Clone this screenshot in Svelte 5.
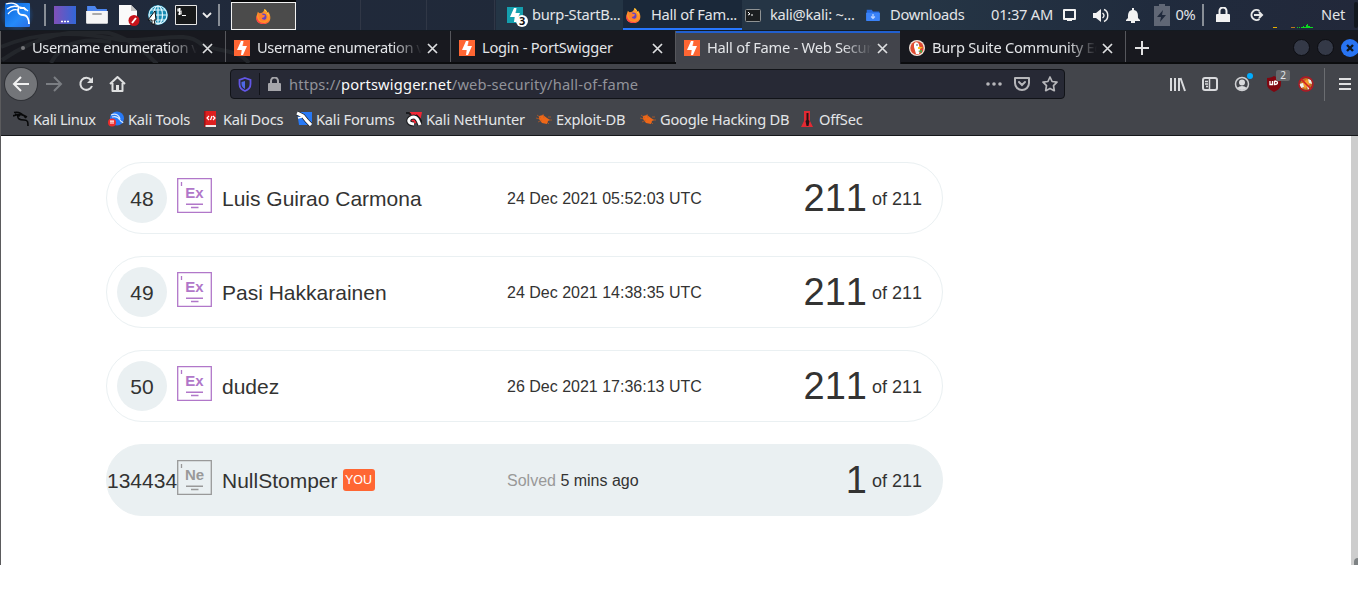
<script>
  const tabs = [
    { title: 'Username enumeration via', kind: 'dot', tight: true },
    { title: 'Username enumeration via', kind: 'burp', tight: true },
    { title: 'Login - PortSwigger', kind: 'burp' },
    { title: 'Hall of Fame - Web Security', kind: 'burp', active: true },
    { title: 'Burp Suite Community Edition', kind: 'duck' }
  ];
  const bookmarks = [
    ['dragon', 'Kali Linux'], ['tools', 'Kali Tools'], ['docs', 'Kali Docs'], ['forums', 'Kali Forums'],
    ['hunter', 'Kali NetHunter'], ['bug', 'Exploit-DB'], ['bug', 'Google Hacking DB'], ['offsec', 'OffSec']
  ];
  const rows = [
    { rank: 48, name: 'Luis Guirao Carmona', date: '24 Dec 2021 05:52:03 UTC', solved: 211 },
    { rank: 49, name: 'Pasi Hakkarainen', date: '24 Dec 2021 14:38:35 UTC', solved: 211 },
    { rank: 50, name: 'dudez', date: '26 Dec 2021 17:36:13 UTC', solved: 211 },
    { rank: 134434, name: 'NullStomper', date: '5 mins ago', solved: 1, you: true }
  ];
</script>

{#snippet burp(color)}
  <svg width="16" height="16" viewBox="0 0 16 16"><path fill={color} d="M0 0h16v16H0z"/><path fill="#fff" d="M7 1h2.500v5h3.500L9 15H7v-5H3z"/><path fill={color} d="m9.500 1-1 5H10zM7 15l.7-5H6z"/></svg>
{/snippet}

{#snippet firefox()}
  <svg width="15" height="15" viewBox="0 0 16 16"><path fill="#ff9328" d="M1 6 2 3l2 2c2-1 4-1 5-5 2 1 3 3 3 4l1-1c4 5 3 13-5 13C1 16-1 11 1 6z"/><path fill="#ff3750" d="M1 7c0 5 3 8 7 8 5 0 8-4 6-9 2 7-2 10-6 10-6 0-9-4-7-9z"/><path fill="#ffdf45" d="M9 0c3 2 3 4 3 5 2 1 2 4 1 6 2-4 0-7-2-8C9 2 9 1 9 0z"/><circle cx="7.500" cy="8.500" r="3.700" fill="#6542c4"/><path fill="#ff802e" d="M2 5c2-1 4 0 5 1l3 1-2 2c-2 0-2 1-1 2 2 1 4 0 5-1-1 4-8 5-9-1z"/></svg>
{/snippet}

{#snippet folder(front, back, w)}
  <svg width={w} height={w * .9} viewBox="0 0 22 20"><path fill={back} d="M1 1h8l2 3h10v5H1z"/><path fill={front} d="M0 6h22v12q0 1-1 1H1q-1 0-1-1z"/>{#if w > 18}<path stroke="#aaa" stroke-width="2" stroke-linecap="round" d="M7 9h8"/>{:else}<path stroke="#bcd4ff" stroke-width="2" fill="none" d="M11 8v7M8 12l3 3 3-3"/>{/if}</svg>
{/snippet}

{#snippet close()}
  <svg width="11" height="11" viewBox="0 0 11 11"><path d="m1 1 9 9m0-9-9 9" fill="none" stroke="#dedfe1" stroke-width="1.700"/></svg>
{/snippet}

{#snippet mark(kind)}
  <svg width="16" height="16" viewBox="0 0 16 16">
    {#if kind === 'dragon'}
      <path fill="none" stroke="#08090a" stroke-width="1.600" d="M1 1.500c5-1 7 0 9 3M0 5c4-2 7-2 10-1l4 2M5 4c-1 4 2 5 6 5s4 2 4 6M2 3l5 2m4 0 2 2"/>
    {:else if kind === 'tools'}
      <circle cx="9" cy="7.500" r="7" fill="#2779f6"/><path fill="none" stroke="#d8eaff" stroke-width="1.200" d="M3 4c5-2 8 0 9 4M4 6c3-1 6 0 8 3s2 1 3 3"/><circle cx="4" cy="11.500" r="4" fill="#ed2c2c"/><path stroke="#fff" d="M2 10h4M3 10v3m2-3v3"/>
    {:else if kind === 'docs'}
      <path fill="#de1f1f" d="M1 0h12v14H1z"/><path fill="#f3eaea" d="M2 14h11v2H2z"/><path fill="#971518" d="M1 0h1.500v16H1z"/><path fill="none" stroke="#fff" stroke-width="1.200" d="M6 5 4 7l2 2m3-4L7.500 9m2.500-4 2 2-2 2"/>
    {:else if kind === 'forums'}
      <path fill="#2779f6" d="M1 1h15v13H3z"/><path fill="none" stroke="#17191c" stroke-width="4.500" d="m1 2 6 3 4 5 4 4"/><path fill="none" stroke="#fff" stroke-width="3.200" d="m1 2 6 3 4 5 4 4"/><path stroke="#fff" stroke-width="1.500" d="m2 7 4-1"/>
    {:else if kind === 'hunter'}
      <path fill="#f32735" d="M3 1h13l-2 10-8 2z"/><path fill="none" stroke="#191b1e" stroke-width="2" d="M0 2h3l2 2M10 4l4 4 2 4"/><path fill="none" stroke="#191b1e" stroke-width="5" d="M8 13c-8 0-6-7 0-7 3 0 4 3 6 8"/><path fill="none" stroke="#fff" stroke-width="3" d="M8 13c-8 0-6-7 0-7 3 0 4 3 6 8"/>
    {:else if kind === 'bug'}
      <path fill="#ed6718" d="m3 5 4-1 4 3 3 2-2 1-1 3-5-1-3-4z"/><path stroke="#c75d20" stroke-width=".7" fill="none" d="m1 4 4 3M0 7l4 1M2 11l4-2m1-6 1 4m4-1h3m-4 5 2 2m0-4h3"/>
    {:else}
      <path fill="#e32932" d="M5 0h6v10l3 6H2l3-6z"/><path fill="#241316" d="M7.500 2h2v7l1 1-1 5h-2l-1-5 1-1z"/>
    {/if}
  </svg>
{/snippet}

<div class="screen">
  <header class="panel">
    <div class="cell kali"><svg width="26" height="26" viewBox="0 0 26 26"><defs><linearGradient id="kg" x2="1" y2="1"><stop stop-color="#0763d7"/><stop offset=".6" stop-color="#258af9"/><stop offset="1" stop-color="#2b6ee5"/></linearGradient></defs><rect x="1" y="1" width="25" height="24" rx="1" fill="url(#kg)"/><path fill="none" stroke="#fff" stroke-width="1.300" d="M2 2c6-2 10-1 13 3l5 1 4 3M3 7c4-3 9-3 12-2M4 12c3-4 7-5 10-4"/><path fill="none" stroke="#fff" stroke-width="1.900" d="M15 5c-2 4-1 8 4 8 4 0 6 4 6 9M16 6h4l2 2"/></svg></div>
    <div class="cell"><i class="bar"></i></div>
    <div class="cell"><svg width="22" height="18"><defs><linearGradient id="dg" x2="1"><stop stop-color="#8050b8"/><stop offset="1" stop-color="#3267d8"/></linearGradient></defs><path fill="url(#dg)" d="M0 0h22v18H0z"/><path stroke="#fff" stroke-width="1.500" stroke-dasharray="2 1" d="M7 15.500h8"/></svg></div>
    <div class="cell">{@render folder('#f5f5f5', '#4c86ef', 22)}</div>
    <div class="cell"><svg width="22" height="22" viewBox="0 0 22 22"><path fill="#fafafa" d="M1 1h12l6 6v14H1z"/><path fill="#c5c5c5" d="m13 1 6 6h-6z"/><circle cx="16" cy="16.500" r="5.500" fill="#c7131b"/><path stroke="#fff" stroke-width="2" d="m14 19 4-5"/></svg></div>
    <div class="cell"><svg width="22" height="22" viewBox="0 0 22 22"><circle cx="11" cy="11" r="10" fill="#168ab2"/><g fill="none" stroke="#dff7ff" stroke-width="1.200"><circle cx="11" cy="11" r="9"/><ellipse cx="11" cy="11" rx="4.500" ry="9"/><path d="M2 11h18M4 6h14M4 16h14M11 2v18"/></g><path fill="#fff" stroke="#111" d="m8 7-7 9h4v4h3l-1-4h2z"/></svg></div>
    <div class="cell"><svg width="22" height="20"><path fill="#17191a" stroke="#e5e5e5" d="M.5.500h21v19H.500z"/><path fill="none" stroke="#fff" stroke-width="1.200" d="M6 4H3v2h3v3H3m1.500-6v7M7 10.500h4"/></svg></div>
    <div class="cell"><svg width="10" height="8"><path fill="none" stroke="#eee" stroke-width="1.800" d="m1 2 4 4 4-4"/></svg></div>
    <div class="cell"><i class="bar"></i></div>
    <div class="workspace">{@render firefox()}</div>
    <div class="segments"><i></i><i></i><i></i></div>
    <div class="task first"><span class="app-icon">{@render burp('#149fae')}<b>3</b></span><span>burp-StartB...</span></div>
    <div class="task focused">{@render firefox()}<span>Hall of Fam...</span></div>
    <div class="task terminal"><svg width="16" height="15"><rect x=".5" y="1.500" width="15" height="12" rx="1" fill="#1b1e20" stroke="#8f9394"/><path fill="none" stroke="#fff" d="m3 4 2 2-2 1m3 0h2"/></svg><span>kali@kali: ~...</span></div>
    <div class="task downloads">{@render folder('#3a82f7', '#276be0', 14)}<span>Downloads</span></div>
    <div class="cell clock">01:37 AM</div>
    <div class="cell"><svg width="15" height="14"><path fill="none" stroke="#f2f2f2" stroke-width="2" stroke-linejoin="round" d="M2 2h11v9H2z"/><path stroke="#f2f2f2" stroke-width="2" d="M5 12h5"/></svg></div>
    <div class="cell"><svg width="16" height="15" viewBox="0 0 16 15"><path fill="#f2f2f2" d="M0 5h3l5-4v13l-5-4H0z"/><path fill="none" stroke="#f2f2f2" stroke-width="1.400" d="M9.500 5q3 2.500 0 5M11 1.500c5 2 5 10 0 12"/></svg></div>
    <div class="cell"><svg width="14" height="15"><path fill="#f2f2f2" d="M6 0h2v2c4 1 4 4 4 8l2 2v1H0v-1l2-2c0-4 0-7 4-8zM5 13h4v2H5z"/></svg></div>
    <div class="cell"><svg width="16" height="22"><path fill="#606775" d="M5 0h6v2h5v20H0V2h5z"/><path fill="#202a3c" d="m9 6-6 7h4l-1 5 6-7H8z"/></svg></div>
    <div class="cell percent">0%</div>
    <div class="cell"><i class="bar"></i></div>
    <div class="cell"><svg width="14" height="16"><path fill="#f2f2f2" d="M1 7h12q1 0 1 1v7H0V8q0-1 1-1z"/><path fill="none" stroke="#f2f2f2" stroke-width="2" d="M3.500 8V4a3.500 3.500 0 0 1 7 0v4"/></svg></div>
    <div class="cell"><svg width="15" height="14"><path fill="none" stroke="#e8e8e8" stroke-width="2" d="M10.500 3a5 5 0 1 0 0 8M5 7h8m-3-3 3 3-3 3"/></svg></div>
    <div class="graph"><svg width="40" height="6"><path stroke="#eab000" stroke-width="1" d="M0 3.500h4"/><path stroke="#b7791e" stroke-width="1" d="M18 3.500h4"/><path fill="#0adb20" d="M24 3h1v1h-1zm2 0h1v1h-1zm2 0h2V2h1v1h2V1h1V0h1v2h2v1h3v1H28z"/></svg></div>
    <div class="cell net">Net</div>
    <div class="cell"><i class="end"></i></div>
  </header>

  <section class="browser">
    <nav class="tabs">
      <svg class="wallpaper" width="300" height="32"><path fill="none" stroke="#23262b" stroke-width="4" d="M1 29C40 3 70-2 108 2c22 6 35 18 48 31M0 16c40-17 80-15 120-7 40 1 65-10 80 4 15 8 35 4 48 19M50 32c10-20 30-26 60-21"/></svg>
      {#each tabs as tab}
        <div class="tab" class:active={tab.active} class:tight={tab.tight}>
          {#if tab.kind === 'burp'}{@render burp('#ff6633')}
          {:else if tab.kind === 'duck'}<svg width="16" height="16" viewBox="0 0 16 16"><circle cx="8" cy="8" r="8" fill="#f1e5dc"/><circle cx="8" cy="8" r="6.700" fill="#df4b32"/><path fill="#fff" d="M5 4c1-3 5-2 5 1l1 5-1 4H7L5 7z"/><path fill="#ffc31e" d="M9 7h5l-3 2H9z"/><path fill="#42a847" d="m9 11 4-1v3z"/><circle cx="8" cy="5" r=".8" fill="#254a5c"/></svg>
          {:else}<i class="dot"></i>{/if}
          <span class="tab-title" class:fade={tab.title.length > 20}>{tab.title}</span>
          {@render close()}
        </div>
      {/each}
      <div class="plus"><svg width="14" height="14"><path stroke="#e1e1e2" stroke-width="2" d="M7 0v14M0 7h14"/></svg></div>
      <div class="window-buttons"><i></i><i></i><i class="quit"><svg width="8" height="8"><path stroke="#101820" stroke-width="2.400" d="m1 1 6 6m0-6L1 7"/></svg></i></div>
    </nav>

    <div class="toolbar">
      <span class="back"><svg width="18" height="16"><path fill="none" stroke="#f1f1f1" stroke-width="2" d="M17 8H2m7-7L2 8l7 7"/></svg></span>
      <svg width="18" height="16"><path fill="none" stroke="#7b7e83" stroke-width="2" d="M1 8h15M9 1l7 7-7 7"/></svg>
      <svg width="16" height="16"><path fill="none" stroke="#dedfe0" stroke-width="2" d="M13 4a6 6 0 1 0 1 6"/><path fill="#dedfe0" d="M15 1v6H9z"/></svg>
      <svg width="17" height="16"><path fill="none" stroke="#dedfe0" stroke-width="2" stroke-linejoin="round" d="m1 8 7.500-7L16 8M3.500 7v8h10V7"/><path fill="#dedfe0" d="M7 9h3v5H7z"/></svg>
      <div class="address">
        <svg width="14" height="15"><path fill="none" stroke="#6256e6" stroke-width="1.800" d="M7 1 12.500 3v4q0 5-5.500 7-5.500-2-5.500-7V3z"/><path fill="#4f68e5" d="M7 4v8Q3.500 10 3.500 7V5z"/></svg>
        <i class="divider"></i>
        <svg width="13" height="15"><path fill="#a5a5aa" d="M1 6h11q1 0 1 1v7H0V7q0-1 1-1z"/><path fill="none" stroke="#a5a5aa" stroke-width="2" d="M3 7V4a3.500 3.500 0 0 1 7 0v3"/></svg>
        <span class="url">https://<b>portswigger.net</b>/web-security/hall-of-fame</span>
        <svg class="page-action" width="16" height="4"><circle cx="2" cy="2" r="1.800" fill="#b6b6ba"/><circle cx="8" cy="2" r="1.800" fill="#b6b6ba"/><circle cx="14" cy="2" r="1.800" fill="#b6b6ba"/></svg>
        <svg width="16" height="15"><path fill="none" stroke="#b6b6ba" stroke-width="2" stroke-linejoin="round" d="M1 1h14v5a7 7 0 0 1-14 0z"/><path fill="none" stroke="#b6b6ba" stroke-width="2" stroke-linecap="round" d="m5 5 3 3 3-3"/></svg>
        <svg width="16" height="16" viewBox="0 0 16 16"><path fill="none" stroke="#b6b6ba" stroke-width="1.700" stroke-linejoin="round" d="m8 1 2.100 4.500 4.900.7-3.500 3.500.8 5L8 12.400l-4.300 2.300.8-5L1 6.200l4.900-.7z"/></svg>
      </div>
      <div class="actions">
        <svg width="16" height="15"><path fill="none" stroke="#d9dadd" stroke-width="2" d="M1 1v13M5 1v13M9 1v13M10.500 1l4.500 13"/></svg>
        <svg width="16" height="15"><rect x="1" y="1" width="14" height="12" rx="2" fill="none" stroke="#d9dadd" stroke-width="2"/><path stroke="#d9dadd" stroke-width="1.500" d="M7.500 1v12M3 4.500h3M3 7h3M4 9.500h2"/></svg>
        <span class="account"><svg width="16" height="16"><circle cx="8" cy="8" r="6.500" fill="none" stroke="#cfd0d3" stroke-width="1.500"/><circle cx="8" cy="6.500" r="3" fill="#d9dadd"/><path fill="#d9dadd" d="M3 12q5-4 10 0-5 4-10 0z"/></svg><i></i></span>
        <span class="shield"><svg width="14" height="16"><path fill="#800610" d="M7 0q3 2 7 2v6c0 4-3 6-7 8-4-2-7-4-7-8V2q4 0 7-2z"/><path fill="none" stroke="#fff" stroke-width="1.300" d="M3 5v3.500h2.500V5m2 0v3.500c4 0 4-3.500 0-3.500"/></svg><b>2</b></span>
        <svg width="16" height="16"><circle cx="8" cy="8" r="6" fill="#c96b20"/><path fill="#f29a2c" d="m4 8 5-5 5 3-4 4-3 3z"/><path fill="#eee" d="m1 8 4-1 1 4-3 1zm9-5 3 1 1 4-3-1zM9 10l3 1-2 3z"/><circle cx="8" cy="8" r="7" fill="none" stroke="#b51822" stroke-width="1.400"/><path stroke="#d11c24" stroke-width="1.600" d="m3 3 10 10"/></svg>
      </div>
      <i class="menu-line"></i>
      <svg class="menu" width="12" height="14"><path stroke="#e0e0e1" stroke-width="2" d="M0 2h12M0 7h12M0 12h12"/></svg>
    </div>

    <div class="bookmarks">
      {#each bookmarks as [kind, label]}
        <span class="bookmark {kind}">{@render mark(kind)}<span>{label}</span></span>
      {/each}
    </div>

    <main>
      <div class="ranking">
        {#each rows as row}
          <article class:you={row.you}>
            <span class="rank">{row.rank}</span>
            <svg class="level" width="35" height="35"><path fill="none" stroke="currentColor" stroke-width="1.300" d="M.7.700h33.600v33.600H.700zM4.500 4v4"/><path stroke="currentColor" stroke-width="1.500" d="M9 26.200h17M14 29.500h7.500"/><text x="17.500" y="20" text-anchor="middle">{row.you ? 'Ne' : 'Ex'}</text></svg>
            <span class="name">{row.name}{#if row.you}<em>YOU</em>{/if}</span>
            <span class="date">{#if row.you}<i>Solved</i>{' '}{/if}{row.date}</span>
            <span class="score"><strong>{row.solved}</strong><span>of 211</span></span>
          </article>
        {/each}
      </div>
      <div class="scrollbar"><i></i></div>
    </main>
  </section>
</div>

<style>
  :global(body) { margin: 0; background: #fff; overflow: hidden; }
  .screen { width: 1358px; height: 604px; font: 14.67px/20px "Noto Sans", sans-serif; letter-spacing: -.25px; color: #e3e5e8; white-space: nowrap; overflow: hidden; }
  svg { display: block; flex-shrink: 0; }
  .panel { height: 31px; box-sizing: border-box; border-bottom: 1px solid #141a20; display: grid; background: linear-gradient(90deg, #202a3c, #202939 40%, #253545 55%, #253545 68%, #202b3d 85%, #22283a); grid-template-columns: 34px 21px 20px 44px 20px 38px 18px 24px 0 77px 200px 127px 119px 123px 120px 74px 21px 42px 22px 36px 11px 24px 16px 50px 32px 40px 1fr; grid-template-rows: 30px; }
  .cell { display: flex; align-items: center; justify-content: center; }
  .cell :global(*) { flex-shrink: 0; }
  .kali { background: radial-gradient(circle, #1774df, transparent 75%); }
  .bar { width: 2px; height: 22px; background: #888e96; }
  .end { width: 4px; height: 26px; background: #13181f; border-radius: 2px; }
  .workspace { box-sizing: border-box; margin: 2px 0 0 12px; width: 65px; height: 28px; border: 1px solid #f2f2f2; background: #4b4b4b; display: flex; align-items: center; justify-content: center; box-shadow: 0 -2px #050607; }
  .segments { display: grid; grid-template-columns: 65px 66px 68px; }
  .segments i { border-right: 1px solid #303746; }
  .task { display: flex; align-items: center; gap: 9px; padding-left: 11px; background: #243545; }
  .focused { background: #1a2839; box-shadow: inset 0 -2px #2777ff; gap: 10px; padding-left: 3px; }
  .terminal { padding-left: 3px; background: none; }
  .downloads { padding-left: 1px; gap: 10px; background: none; }
  .app-icon { position: relative; }
  .app-icon b { position: absolute; left: 9px; top: 8px; width: 12px; height: 12px; border-radius: 6px; background: #fff; color: #111; text-align: center; font: bold 11px/12px "Noto Sans", sans-serif; }
  .graph { display: flex; align-items: end; margin-left: -8px; }
  .task > span:last-child, .clock, .percent, .net { margin-top: -2px; }
  .browser { border-left: 1px solid #5b5b5d; height: 534px; box-sizing: border-box; }
  .tabs { height: 33px; box-sizing: border-box; border-bottom: 2px solid #0b0c0e; background: #18191f; display: flex; position: relative; }
  .wallpaper { position: absolute; left: 0; top: 0; }
  .tab { width: 225px; box-sizing: border-box; display: flex; align-items: center; padding: 3px 12px 0 8px; border-right: 1px solid #56575c; position: relative; }
  .tab.active { background: #42444b; box-shadow: inset 0 2px #215fce; height: 33px; border-color: #18191f; padding-bottom: 2px; }
  .tab-title { width: 165px; overflow: hidden; margin: -2px 4px 0 7px; }
  .tight .tab-title { letter-spacing: -.42px; }
  .tab > :global(svg:last-child) { margin-left: auto; }
  .fade { mask-image: linear-gradient(90deg, #000 82%, transparent 100%); }
  .dot { width: 4px; height: 4px; border-radius: 2px; background: #75767a; margin: 0 0 0 12px; }
  .plus { padding: 10px 0 0 9px; }
  .window-buttons { margin-left: auto; display: flex; gap: 7px; align-items: center; padding-top: 2px; margin-right: -1px; }
  .window-buttons i { width: 17px; height: 17px; box-sizing: border-box; border: 1px solid #0c0d12; background: #343947; border-radius: 50%; }
  .window-buttons .quit { width: 18px; height: 18px; background: #2874f3; border: 0; display: flex; align-items: center; justify-content: center; }
  .toolbar { height: 40px; background: #43454b; display: flex; align-items: center; }
  .toolbar > :global(*) { flex-shrink: 0; }
  .toolbar > svg { margin-right: 15px; }
  .back { width: 32px; height: 32px; border-radius: 50%; background: #737579; box-shadow: 0 0 0 1px #303237; display: flex; align-items: center; justify-content: center; margin: 0 8px 0 4px; }
  .address { width: 833px; height: 28px; border: 1px solid #111318; border-radius: 4px; background: #272935; display: flex; align-items: center; margin-left: 89px; }
  .address > svg:first-child { margin-left: 7px; }
  .divider { height: 22px; width: 1px; background: #111319; margin: 0 8px 0 7px; }
  .url { margin-left: 8px; color: #92939a; letter-spacing: .18px; }
  .url b { color: #fafafa; font-weight: 400; }
  .page-action { margin-left: auto; }
  .address .page-action + svg { margin: 0 12px; }
  .address > svg:last-child { margin-right: 6px; }
  .actions { display: flex; align-items: center; gap: 16px; margin-left: 105px; }
  .account, .shield { position: relative; }
  .shield { padding: 0 1px; }
  .account i { position: absolute; width: 6px; height: 6px; background: #00adff; border-radius: 50%; left: 13px; top: -3px; }
  .shield b { position: absolute; left: 10px; top: -6px; width: 14px; height: 11px; border-radius: 2px; background: #66686b; text-align: center; font: 10px/11px "Noto Sans", sans-serif; }
  .menu-line { margin: 0 14px 0 10px; width: 1px; height: 33px; background: #6b6d71; }
  .toolbar .menu { margin-right: 0; }
  .bookmarks { height: 32px; box-sizing: border-box; border-bottom: 1px solid #15171a; background: #43454b; display: grid; grid-template-columns: 95px 95px 93px 110px 130px 104px 159px 1fr; align-items: center; padding: 0 0 1px 12px; letter-spacing: -.22px; }
  .bookmark { display: flex; align-items: center; gap: 4px; }
  .dragon { letter-spacing: -.33px; }
  .bookmark > span { margin-top: -1px; }
  main { height: 429px; display: flex; background: #fff; }
  .ranking { padding: 26px 0 0 105px; width: 837px; display: flex; flex-direction: column; gap: 22px; }
  article { height: 72px; box-sizing: border-box; border: 1px solid #eaf0f2; border-radius: 36px; display: grid; grid-template-columns: 70px 45px 285px 215px 1fr; align-items: center; font: 21px/24px "Liberation Sans", sans-serif; letter-spacing: 0; color: #333332; }
  article.you { background: #eaf0f2; }
  .rank { width: 50px; height: 50px; line-height: 51px; border-radius: 50%; background: #eaf0f2; text-align: center; margin-left: 10px; }
  .you .rank { width: 70px; margin-left: 0; background: none; }
  .level { color: #b177c9; margin-top: -5px; }
  .you .level { color: #999; }
  .level text { fill: currentColor; font: bold 15px "Liberation Sans", sans-serif; }
  .name { display: flex; align-items: center; padding-top: 2px; }
  em { font: 12.5px/23px "Liberation Sans", sans-serif; background: #f63; color: #fff; border-radius: 3px; width: 32px; text-align: center; height: 22px; margin-left: 5px; margin-top: -3px; }
  .date { font-size: 16px; padding-top: 1px; }
  .date i { color: #999; font-style: normal; }
  .score { font-size: 18px; display: flex; align-items: center; justify-content: flex-end; gap: 5px; padding-right: 20px; font-kerning: none; }
  .score strong { font-size: 38px; font-weight: 400; }
  .score span { padding-top: 2px; }
  .scrollbar { width: 7px; background: #cdcdcd; margin-left: auto; display: flex; align-items: end; justify-content: end; overflow: hidden; }
  .scrollbar i { width: 4px; height: 7px; background: #7e8284; border-radius: 4px 0 0; }
</style>
